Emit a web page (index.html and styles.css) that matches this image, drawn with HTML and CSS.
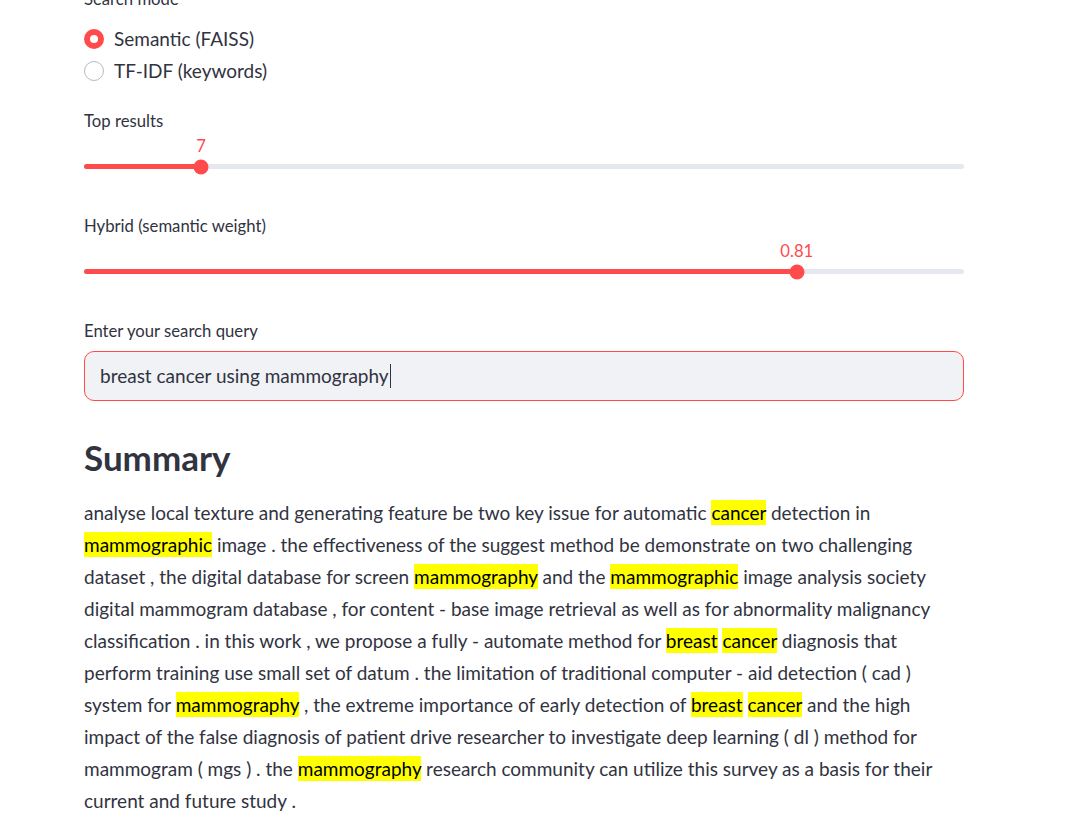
FILE: index.html
```html
<!DOCTYPE html>
<html lang="en">
<head>
<meta charset="utf-8">
<title>Search</title>
<link rel="stylesheet" href="styles.css">
</head>
<body>
<main class="main">
  <section class="block radio-block">
    <div class="label">Search mode</div>
    <div class="radio-option">
      <span class="radio radio-on"></span>
      <span class="radio-text">Semantic (FAISS)</span>
    </div>
    <div class="radio-option">
      <span class="radio"></span>
      <span class="radio-text">TF-IDF (keywords)</span>
    </div>
  </section>

  <section class="block slider-block first-slider">
    <div class="label">Top results</div>
    <div class="slider-area">
      <div class="track">
        <div class="track-fill" style="width:13.3%"></div>
        <div class="thumb" style="left:13.3%">
          <span class="thumb-value">7</span>
        </div>
      </div>
    </div>
  </section>

  <section class="block slider-block">
    <div class="label">Hybrid (semantic weight)</div>
    <div class="slider-area">
      <div class="track">
        <div class="track-fill" style="width:81%"></div>
        <div class="thumb" style="left:81%">
          <span class="thumb-value">0.81</span>
        </div>
      </div>
    </div>
  </section>

  <section class="block input-block">
    <div class="label input-label">Enter your search query</div>
    <div class="text-input">breast cancer using mammography<span class="caret"></span></div>
  </section>

  <h3 class="heading">Summary</h3>

  <p class="summary">analyse local texture and generating feature be two key issue for automatic <mark class="hl">cancer</mark> detection in <mark class="hl">mammographic</mark> image . the effectiveness of the suggest method be demonstrate on two challenging dataset , the digital database for screen <mark class="hl">mammography</mark> and the <mark class="hl">mammographic</mark> image analysis society digital mammogram database , for content - base image retrieval as well as for abnormality malignancy classification . in this work , we propose a fully - automate method for <mark class="hl">breast</mark> <mark class="hl">cancer</mark> diagnosis that perform training use small set of datum . the limitation of traditional computer - aid detection ( cad ) system for <mark class="hl">mammography</mark> , the extreme importance of early detection of <mark class="hl">breast</mark> <mark class="hl">cancer</mark> and the high impact of the false diagnosis of patient drive researcher to investigate deep learning ( dl ) method for mammogram ( mgs ) . the <mark class="hl">mammography</mark> research community can utilize this survey as a basis for their current and future study .</p>
</main>
</body>
</html>
```

FILE: styles.css
```css
html, body {
  margin: 0;
  padding: 0;
  background: #ffffff;
}

body {
  font-family: Lato, "Liberation Sans", sans-serif;
  color: #31333f;
  overflow: hidden;
}

.main {
  width: 880px;
  margin-left: 84px;
  display: flex;
  flex-direction: column;
}

.label {
  font-size: 16.7px;
  line-height: 30px;
  height: 30px;
  color: #31333f;
}

/* radio */
.radio-block {
  margin-top: -16px;
}

.radio-block .label {
  margin-bottom: 9px;
}

.radio-option {
  display: flex;
  align-items: center;
  height: 32px;
  gap: 10px;
}

.radio {
  width: 20px;
  height: 20px;
  box-sizing: border-box;
  border-radius: 50%;
  border: 1px solid #b9bac0;
  background: #ffffff;
  flex: none;
}

.radio-on {
  border: 6px solid #ff4b4b;
  background: #ffffff;
}

.radio-text {
  font-size: 19px;
  line-height: 32px;
}

/* sliders */
.slider-block {
  margin-top: 20px;
  height: 85px;
}

.first-slider {
  margin-top: 19px;
}

.slider-area {
  height: 55px;
  padding-top: 28px;
  box-sizing: border-box;
}

.track {
  position: relative;
  height: 5px;
  border-radius: 3px;
  background: #e5e8ef;
}

.track-fill {
  height: 100%;
  border-radius: 3px;
  background: #ff4b4b;
}

.thumb {
  position: absolute;
  top: 50%;
  width: 15px;
  height: 15px;
  border-radius: 50%;
  background: #ff4b4b;
  transform: translate(-50%, -50%);
}

.thumb-value {
  position: absolute;
  left: 50%;
  bottom: 15px;
  transform: translateX(-50%);
  font-size: 16.7px;
  line-height: 28px;
  color: #ff4b4b;
  white-space: nowrap;
}

/* input */
.input-block {
  margin-top: 20px;
}

.input-label {
  margin-bottom: 5px;
}

.text-input {
  height: 50px;
  box-sizing: border-box;
  border: 1px solid #ff4b4b;
  border-radius: 10px;
  background: #f0f2f6;
  padding: 0 15px;
  font-size: 19px;
  line-height: 48px;
  color: #31333f;
  display: flex;
  align-items: center;
}

.caret {
  display: inline-block;
  width: 1px;
  height: 24px;
  background: #31333f;
  margin-left: 1px;
}

/* summary */
.heading {
  margin: 35px 0 0 0;
  font-size: 35px;
  line-height: 42px;
  font-weight: 700;
  color: #31333f;
}

.summary {
  margin: 19px 0 0 0;
  font-size: 19px;
  line-height: 32px;
  color: #31333f;
}

.hl {
  background: #ffff00;
  color: #000000;
  padding: 1px 0;
}
```
